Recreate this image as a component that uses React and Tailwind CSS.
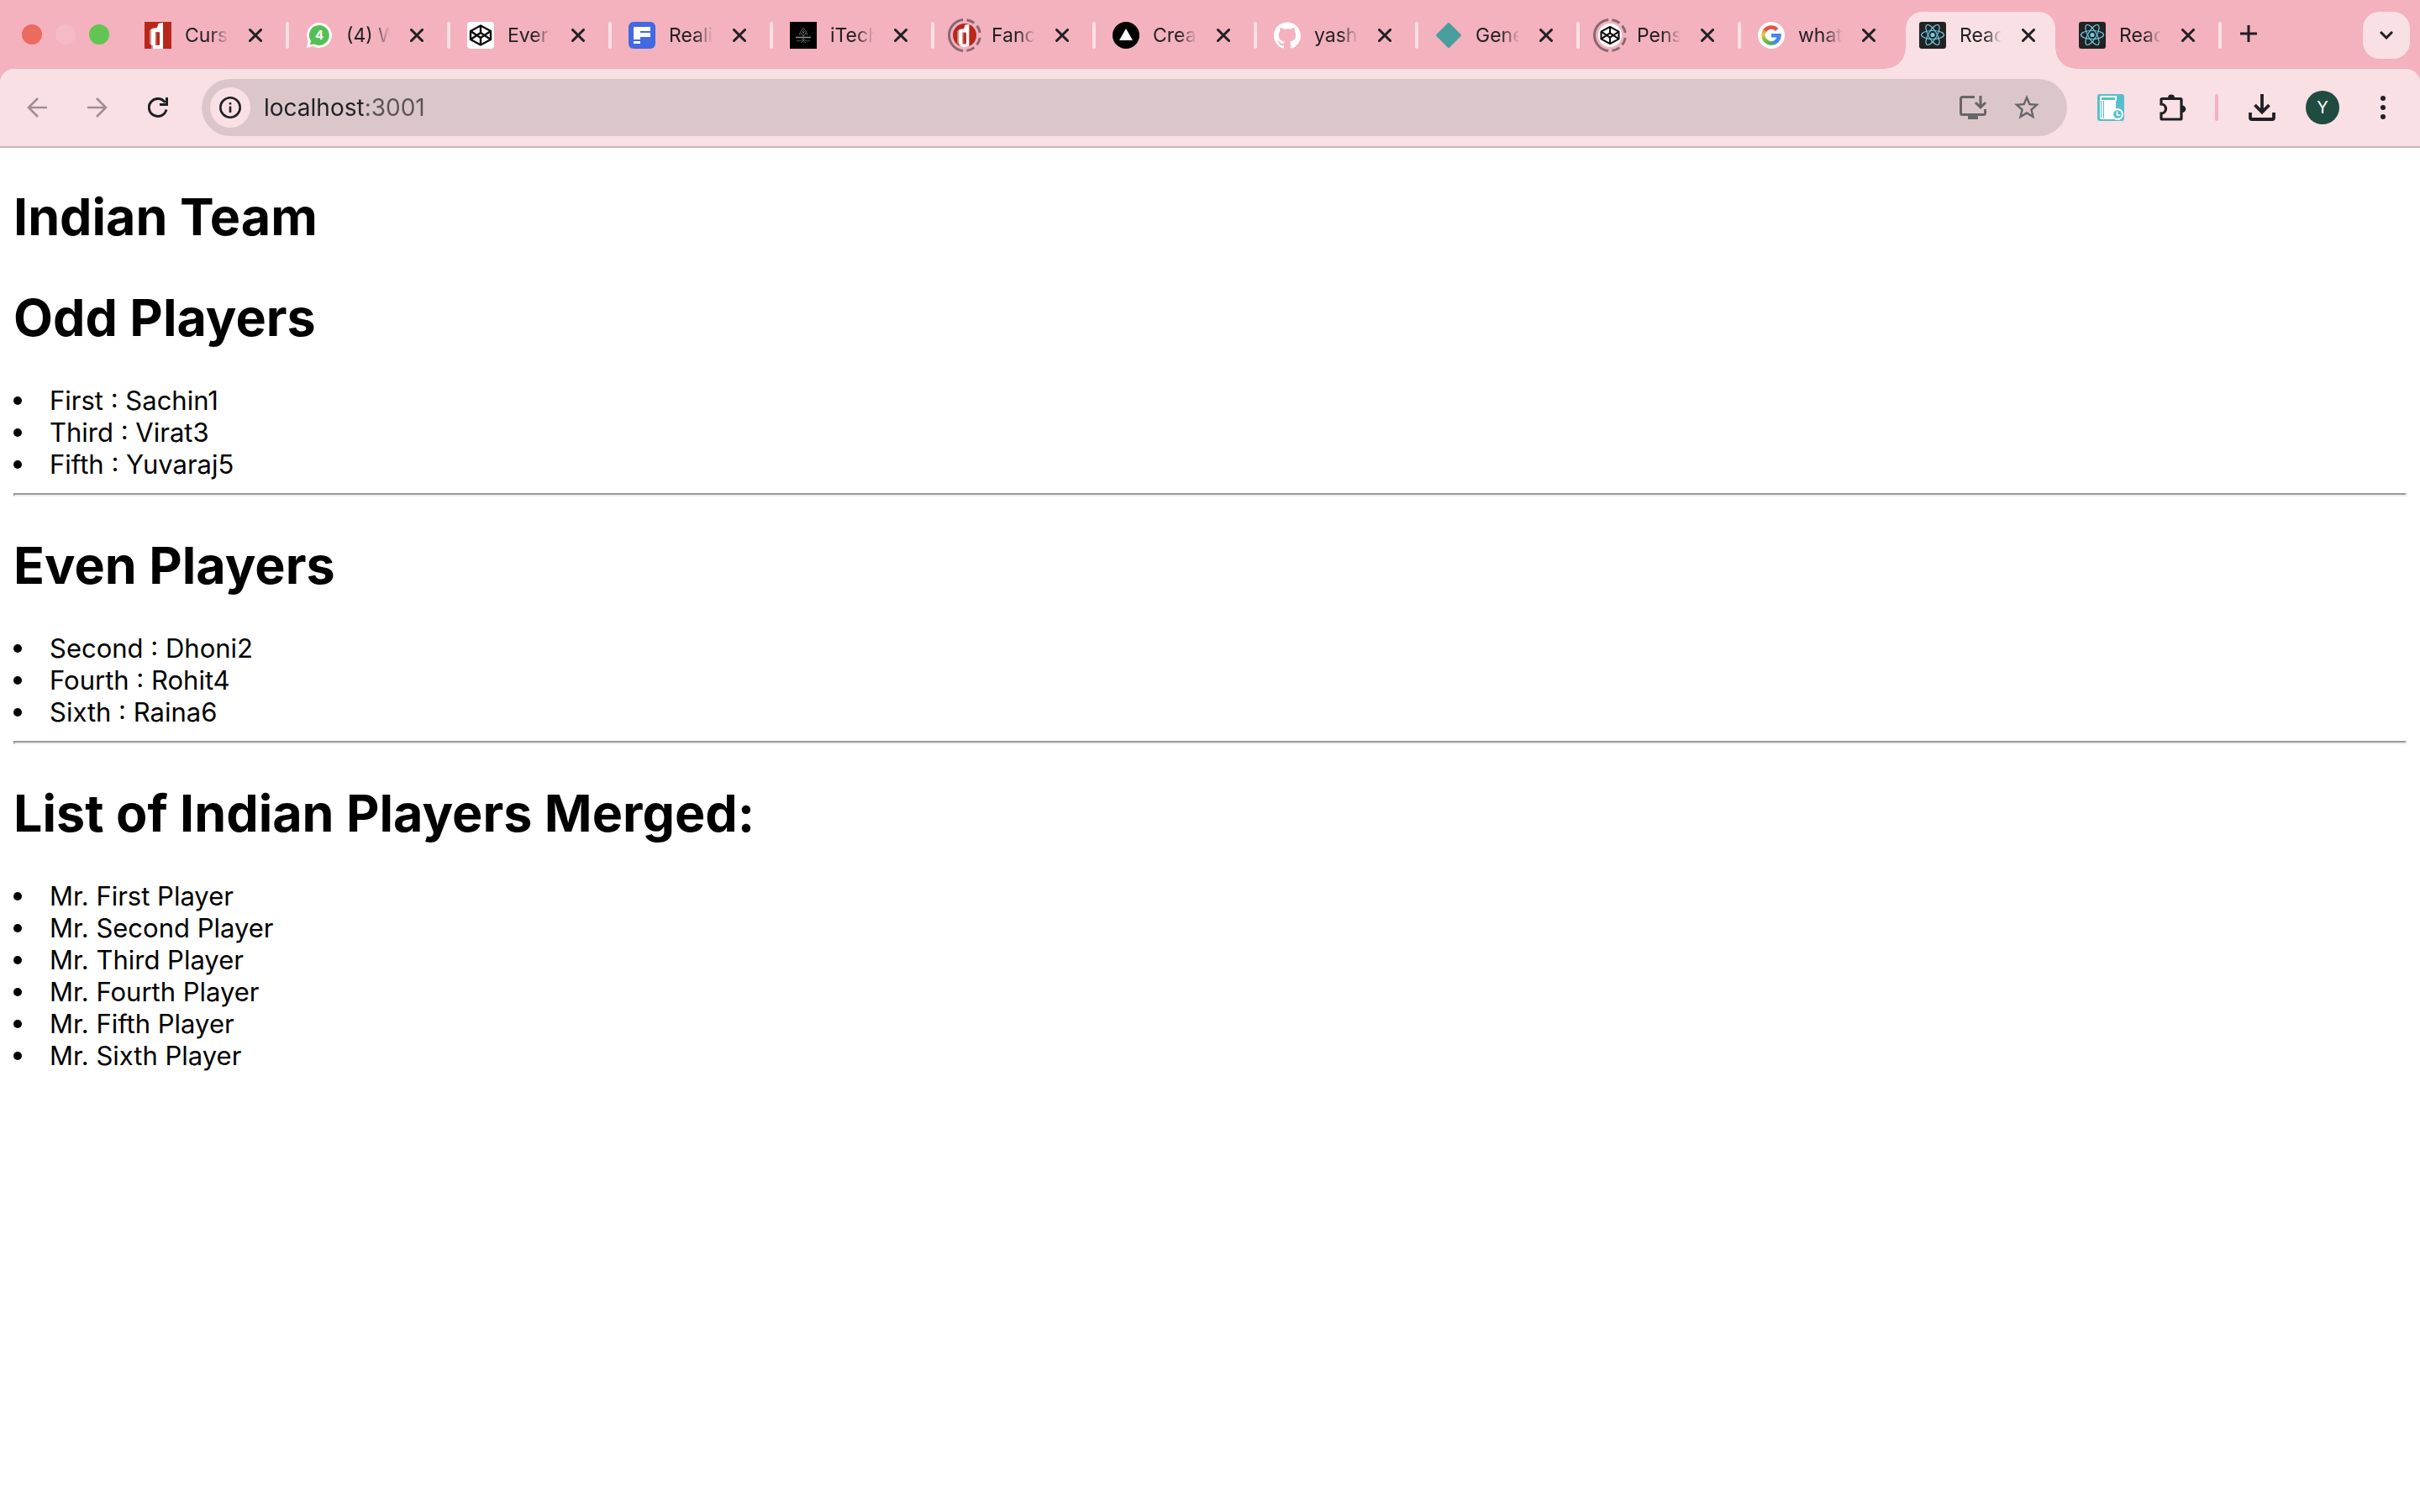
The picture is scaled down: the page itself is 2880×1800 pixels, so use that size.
import { SiGithub } from "react-icons/si";
import { MdStarBorder } from "react-icons/md";

/* ---------- favicons ---------- */

function DLogo({ round = false }) {
  return (
    <svg viewBox="0 0 32 32" className={round ? "size-7 rounded-full" : "size-8"} aria-hidden="true">
      <rect width="32" height="32" fill="#b9271b" />
      <path d="M6 10l4-3h5l1-5 6-1v31H8v-5H6z" fill="#d98d88" />
      <path d="M8 9l7-2 2-5 5-1v31H10v-4H8z" fill="#fff" />
      <path d="M13 12h5v16h-5z" fill="#c65a52" />
      <path d="M15 13h3v14h-3z" fill="#b9271b" />
    </svg>
  );
}

function WhatsApp() {
  return (
    <svg viewBox="0 0 32 32" className="size-8" aria-hidden="true">
      <path d="M16 1a15 15 0 1 1-7.600 28L1 31l1.600-8.500A15 15 0 0 1 16 1z" fill="#fff" />
      <path d="M16 4a12 12 0 1 1-6 22.500L5 27.500l1-4.600A12 12 0 0 1 16 4z" fill="#55bf56" />
      <text x="16" y="21" textAnchor="middle" fontSize="15" fontWeight="700" fontFamily="Inter, sans-serif" fill="#fff">4</text>
    </svg>
  );
}

function CodePen({ round = false }) {
  return (
    <svg viewBox="0 0 32 32" className={round ? "size-7 rounded-full bg-white" : "size-8 rounded bg-white"} aria-hidden="true">
      <g fill="none" stroke="#0b0b0b" strokeWidth="2.400" strokeLinejoin="round">
        <path d="M16 4.500L28 11v10l-12 6.500L4 21V11z" />
        <path d="M4 11l12 8 12-8M4 21l12-8 12 8M16 4.500V13M16 19v8.500" />
      </g>
    </svg>
  );
}

function FLogo() {
  return (
    <svg viewBox="0 0 32 32" className="size-8" aria-hidden="true">
      <rect width="32" height="32" rx="6" fill="#4169e1" />
      <path d="M6 6h20v5H14v2h12v5H14v3H6zM6 23h8v3H6z" fill="#fff" />
    </svg>
  );
}

function TreeLogo() {
  return (
    <svg viewBox="0 0 32 32" className="size-8" aria-hidden="true">
      <rect width="32" height="32" fill="#000" />
      <g fill="none" stroke="#6b6b6b" strokeWidth="0.800">
        <path d="M16 7v18M16 17l-4-4M16 17l4-4M16 13l-3-3M16 13l3-3M12 16l-1-3M20 16l1-3M14 10l1-2M18 10l-1-2M12 11l2 3M20 11l-2 3" />
        <path d="M16 21l-5 2-3-.5M16 21l5 2 3-.5M16 22l-3 3M16 22l3 3" />
      </g>
      <path d="M7 18.500h18" stroke="#8a8a8a" strokeWidth="1.600" />
    </svg>
  );
}

function Vercel() {
  return (
    <svg viewBox="0 0 32 32" className="size-8" aria-hidden="true">
      <circle cx="16" cy="16" r="16" fill="#000" />
      <path d="M16 8l8 14H8z" fill="#fff" />
    </svg>
  );
}

function Diamond() {
  return (
    <svg viewBox="0 0 32 32" className="size-8" aria-hidden="true">
      <path d="M16 2.500L29.500 16 16 29.500 2.500 16z" fill="#489f9d" stroke="#489f9d" strokeWidth="3" strokeLinejoin="round" />
    </svg>
  );
}

function Google() {
  return (
    <svg viewBox="0 0 32 32" className="size-8" aria-hidden="true">
      <defs>
        <linearGradient id="g-left" x1="0" y1="0" x2="0" y2="1">
          <stop offset="0" stopColor="#f08a35" />
          <stop offset="0.400" stopColor="#f5c33b" />
          <stop offset="1" stopColor="#7fb946" />
        </linearGradient>
        <linearGradient id="g-bottom" x1="0" y1="0" x2="1" y2="0">
          <stop offset="0" stopColor="#7fb946" />
          <stop offset="0.500" stopColor="#4cae5a" />
          <stop offset="1" stopColor="#4285f4" />
        </linearGradient>
      </defs>
      <circle cx="16" cy="16" r="16" fill="#fff" />
      <g fill="none" strokeWidth="4.600">
        <path d="M22.700 9.300A9.500 9.500 0 0 0 8.200 10.600" stroke="#e8524a" />
        <path d="M8.500 10.200A9.500 9.500 0 0 0 8.500 21.800" stroke="url(#g-left)" />
        <path d="M8.200 21.400A9.500 9.500 0 0 0 22 23.400" stroke="url(#g-bottom)" />
        <path d="M21.600 23.700A9.500 9.500 0 0 0 25.400 16.200H16" stroke="#4785ee" />
      </g>
    </svg>
  );
}

function ReactLogo() {
  return (
    <svg viewBox="0 0 32 32" className="size-8" aria-hidden="true">
      <rect width="32" height="32" rx="3" fill="#222" />
      <circle cx="16" cy="15.500" r="2.600" fill="#70cde8" />
      <g fill="none" stroke="#70cde8" strokeWidth="1.200">
        <ellipse cx="16" cy="15.500" rx="13.500" ry="5" />
        <ellipse cx="16" cy="15.500" rx="13.500" ry="5" transform="rotate(60 16 15.500)" />
        <ellipse cx="16" cy="15.500" rx="13.500" ry="5" transform="rotate(120 16 15.500)" />
      </g>
    </svg>
  );
}

/* Broken ring around the icon of a tab that is not loaded */
function Sleeping({ children }) {
  return (
    <span className="relative flex size-8 items-center justify-center">
      {children}
      <svg viewBox="0 0 40 40" className="absolute -inset-1 size-10" aria-hidden="true">
        <circle cx="20" cy="20" r="18.500" fill="none" stroke="#876873" strokeWidth="3" pathLength="360" strokeDasharray="0 10 28 14 30 14 168 14 30 14 28 10" />
      </svg>
    </span>
  );
}

/* ---------- tab strip ---------- */

const tabs = [
  { title: "Curso", icon: <DLogo /> },
  { title: "(4) WhatsApp", icon: <WhatsApp /> },
  { title: "Every", icon: <CodePen /> },
  { title: "Realis", icon: <FLogo /> },
  { title: "iTech", icon: <TreeLogo /> },
  { title: "Fancy", icon: <Sleeping><DLogo round /></Sleeping> },
  { title: "Creat", icon: <Vercel /> },
  { title: "yash", icon: <SiGithub className="size-8 text-white" aria-hidden="true" /> },
  { title: "Gener", icon: <Diamond /> },
  { title: "Pens", icon: <Sleeping><CodePen round /></Sleeping> },
  { title: "what", icon: <Google />, last: true },
  { title: "React", icon: <ReactLogo />, active: true },
  { title: "React", icon: <ReactLogo /> },
];

function Tab({ title, icon, active, last }) {
  return (
    <li className="relative flex w-48 min-w-0 items-start pt-3.5 nth-12:w-[190px] nth-13:w-[190px]">
      {active && (
        <span className="absolute top-3.5 right-2 bottom-0 left-1 rounded-t-[20px] bg-[#f9e0e4]">
          <span className="absolute bottom-0 -left-6 size-6 bg-[radial-gradient(circle_at_0_0,transparent_23px,#f9e0e4_24px)]" />
          <span className="absolute -right-6 bottom-0 size-6 bg-[radial-gradient(circle_at_100%_0,transparent_23px,#f9e0e4_24px)]" />
        </span>
      )}
      <div className="relative flex h-14 min-w-0 flex-1 items-center pl-5">
        <button type="button" className="flex min-w-0 flex-1 items-center gap-4 text-left">
          <span className="shrink-0">{icon}</span>
          <span className="min-w-0 flex-1 overflow-hidden text-[23px] leading-8 whitespace-nowrap [mask-image:linear-gradient(to_right,black_60%,transparent)]">
            {title}
          </span>
        </button>
        <button type="button" aria-label={`Close ${title}`} className="mr-6 ml-5 flex size-6 shrink-0 items-center justify-center">
          <svg viewBox="0 0 16 16" className="size-4" aria-hidden="true">
            <path d="M1.500 1.500l13 13M14.500 1.500l-13 13" stroke="#1f2023" strokeWidth="3" strokeLinecap="round" />
          </svg>
        </button>
        <span className={active || last ? "w-1 shrink-0" : "h-8 w-1 shrink-0 rounded-full bg-[#f9e0e4]"} />
      </div>
    </li>
  );
}

function TabStrip() {
  return (
    <header className="flex h-[82px] items-start bg-[#f4b1be]">
      <div className="mr-[22px] flex h-full shrink-0 items-center gap-4 pl-[26px]">
        <button type="button" aria-label="Close window" className="size-6 rounded-full bg-[#ec6a5e]" />
        <button type="button" aria-label="Minimize window" className="size-6 rounded-full bg-[#f4bac5]" />
        <button type="button" aria-label="Zoom window" className="size-6 rounded-full bg-[#61c554]" />
      </div>
      <ul className="flex h-full min-w-0">
        {tabs.map((tab, i) => (
          <Tab key={i} {...tab} />
        ))}
      </ul>
      <button type="button" aria-label="New tab" className="mt-5 ml-3 flex size-10 shrink-0 items-center justify-center">
        <svg viewBox="0 0 20 20" className="size-5" aria-hidden="true">
          <path d="M10 0v20M0 10h20" stroke="#1f2023" strokeWidth="3" />
        </svg>
      </button>
      <button type="button" aria-label="Search tabs" className="mt-3.5 mr-3 ml-auto flex size-14 shrink-0 items-center justify-center rounded-[20px] bg-[#f9e0e4]">
        <svg viewBox="0 0 16 10" className="h-2.5 w-4" aria-hidden="true">
          <path d="M1 1l7 7 7-7" fill="none" stroke="#1f2023" strokeWidth="3" />
        </svg>
      </button>
    </header>
  );
}

/* ---------- toolbar ---------- */

function IconButton({ label, disabled, children }) {
  return (
    <button type="button" aria-label={label} disabled={disabled} className="flex size-10 shrink-0 items-center justify-center">
      {children}
    </button>
  );
}

function Toolbar() {
  return (
    <div className="bg-[#f4b1be]">
      <nav className="flex h-[94px] items-center gap-8 rounded-t-2xl border-b-2 border-[#c9b4b9] bg-[#f9e0e4] px-6">
        <IconButton label="Back" disabled>
          <svg viewBox="0 0 24 24" className="size-6" fill="none" stroke="#a08e92" strokeWidth="2.600" aria-hidden="true">
            <path d="M24 12H2M13 1L2 12l11 11" />
          </svg>
        </IconButton>
        <IconButton label="Forward" disabled>
          <svg viewBox="0 0 24 24" className="size-6" fill="none" stroke="#a08e92" strokeWidth="2.600" aria-hidden="true">
            <path d="M0 12h22M11 1l11 11-11 11" />
          </svg>
        </IconButton>
        <IconButton label="Reload">
          <svg viewBox="0 0 24 24" className="size-6" fill="none" stroke="#1f2023" strokeWidth="3" aria-hidden="true">
            <path d="M22 14.500A10.500 10.500 0 1 1 20.500 6" />
            <path d="M22.500 0v8.500H14" />
          </svg>
        </IconButton>

        <div className="flex h-[68px] min-w-0 flex-1 items-center rounded-full bg-[#dbc7ca] pr-7 pl-2.5">
          <button type="button" aria-label="View site information" className="mr-4 flex size-12 shrink-0 items-center justify-center rounded-full bg-[#f9e0e4]">
            <svg viewBox="0 0 26 26" className="size-[26px]" aria-hidden="true">
              <circle cx="13" cy="13" r="11.700" fill="none" stroke="#1f2023" strokeWidth="2.600" />
              <path d="M11.700 11.500h2.600V19h-2.600zM11.700 7h2.600v2.600h-2.600z" fill="#1f2023" />
            </svg>
          </button>
          <input
            type="text"
            aria-label="Address"
            defaultValue="localhost:3001"
            className="min-w-0 flex-1 bg-[linear-gradient(to_right,#1f2023_118px,#5b5356_118px)] bg-clip-text text-[28px] leading-10 text-transparent outline-none"
          />
          <div className="flex gap-6">
            <IconButton label="Install app">
              <svg viewBox="0 0 32 32" className="size-8" fill="none" stroke="#676668" strokeWidth="3" aria-hidden="true">
                <path d="M18 3.500H3.500a2 2 0 0 0-2 2V22.500a2 2 0 0 0 2 2H28.500a2 2 0 0 0 2-2V18" />
                <path d="M10 25h12v5H10z" fill="#676668" stroke="none" />
                <path d="M25 2v13M19 10l6 6 6-6" />
              </svg>
            </IconButton>
            <IconButton label="Bookmark this page">
              <MdStarBorder className="size-9 shrink-0 text-[#676668]" aria-hidden="true" />
            </IconButton>
          </div>
        </div>

        <IconButton label="History book extension">
          <svg viewBox="0 0 32 32" className="size-8" aria-hidden="true">
            <rect width="32" height="32" rx="3" fill="#57bfca" />
            <path d="M5 2h18v6l-1 1v21H5a2 2 0 0 1-2-2V4a2 2 0 0 1 2-2z" fill="#fff" />
            <path d="M5 4h16v3H5zM4 8h1v20H4zM7 8h1v21H7z" fill="#57bfca" />
            <circle cx="24" cy="24" r="7" fill="#fff" />
            <circle cx="24" cy="24" r="4.800" fill="#57bfca" />
            <path d="M23.500 20.500V25H27" fill="none" stroke="#fff" strokeWidth="1.600" />
          </svg>
        </IconButton>
        <IconButton label="Extensions">
          <svg viewBox="-4 0 36 36" className="size-9" aria-hidden="true">
            <path d="M3 7.500H25a1 1 0 0 1 1 1V31a1 1 0 0 1-1 1H3a1 1 0 0 1-1-1v-6a5 5 0 0 0 0-11V8.500a1 1 0 0 1 1-1z" fill="none" stroke="#1f2023" strokeWidth="3.200" />
            <path d="M10 6.500a4 4 0 0 1 8 0zM27 15.500a4.300 4.300 0 0 1 0 8.600z" fill="#1f2023" />
          </svg>
        </IconButton>
        <span className="h-8 w-1 shrink-0 rounded-full bg-[#f4b1be]" />
        <IconButton label="Downloads">
          <svg viewBox="0 0 32 32" className="size-8" fill="none" stroke="#1f2023" strokeWidth="3.800" aria-hidden="true">
            <path d="M16 0v21M7.500 13L16 21.500 24.500 13" />
            <path d="M2 22v6a2 2 0 0 0 2 2h24a2 2 0 0 0 2-2v-6" />
          </svg>
        </IconButton>
        <button type="button" aria-label="Profile" className="size-10 shrink-0 rounded-full bg-[#1f4b40] text-center text-[20px] leading-10 text-white">
          Y
        </button>
        <IconButton label="Menu">
          <svg viewBox="0 0 8 28" className="h-7 w-2" fill="#1f2023" aria-hidden="true">
            <circle cx="4" cy="3" r="3" />
            <circle cx="4" cy="14" r="3" />
            <circle cx="4" cy="25" r="3" />
          </svg>
        </IconButton>
      </nav>
    </div>
  );
}

/* ---------- page ---------- */

function Heading({ children }) {
  return <h1 className="mt-11 mb-[42px] text-[61px] leading-[76px] font-bold">{children}</h1>;
}

function PlayerList({ items }) {
  return (
    <ul className="text-[31px] leading-[38px]">
      {items.map((item) => (
        <li key={item} className="flex items-center gap-[33px]">
          <span className="size-2.5 rounded-full bg-black" />
          {item}
        </li>
      ))}
    </ul>
  );
}

function Rule() {
  return <hr className="mt-[15px] h-1 border-2 border-t-[#9a9a9a] border-r-[#eeeeee] border-b-[#eeeeee] border-l-[#9a9a9a]" />;
}

export default function App() {
  return (
    <div className="min-h-screen bg-white font-['Inter',sans-serif] text-[#1f2023]">
      <TabStrip />
      <Toolbar />
      <main className="flow-root px-4 text-black">
        <Heading>Indian Team</Heading>
        <Heading>Odd Players</Heading>
        <PlayerList items={["First : Sachin1", "Third : Virat3", "Fifth : Yuvaraj5"]} />
        <Rule />
        <Heading>Even Players</Heading>
        <PlayerList items={["Second : Dhoni2", "Fourth : Rohit4", "Sixth : Raina6"]} />
        <Rule />
        <Heading>List of Indian Players Merged:</Heading>
        <PlayerList
          items={[
            "Mr. First Player",
            "Mr. Second Player",
            "Mr. Third Player",
            "Mr. Fourth Player",
            "Mr. Fifth Player",
            "Mr. Sixth Player",
          ]}
        />
      </main>
    </div>
  );
}
